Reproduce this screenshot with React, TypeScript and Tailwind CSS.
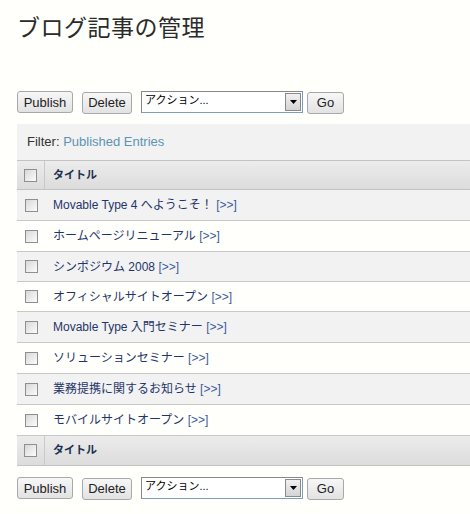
import React from "react";

const FONT = { fontFamily: '"Liberation Sans", Arial, "Noto Sans CJK JP", sans-serif' };

function Checkbox() {
  return (
    <span className="inline-block w-[13px] h-[13px] border border-[#8e8f8f] bg-gradient-to-br from-[#d8d8d8] to-[#fcfcfc]" />
  );
}

function Btn({ label, w }: { label: string; w: string }) {
  return (
    <button className={`${w} h-[22px] border border-[#a8a8a8] rounded-[3px] bg-gradient-to-b from-[#f7f7f7] to-[#e2e2e2] text-[13px] text-[#222] leading-none`}>
      {label}
    </button>
  );
}

function Actions() {
  return (
    <div className="flex items-center">
      <Btn label="Publish" w="w-[56px]" />
      <div className="ml-[9px]">
        <Btn label="Delete" w="w-[50px]" />
      </div>
      <div className="ml-[9px] flex items-stretch w-[162px] h-[22px] border border-[#7f9db9] border-l-[#888] border-t-[#888] bg-white">
        <span className="flex-1 pl-[3px] pt-[1px] text-[11px] text-black leading-[14px]">アクション...</span>
        <span className="w-[16px] m-[1px] border border-[#8a8a8a] bg-gradient-to-b from-[#f0f0f0] to-[#d4d4d4] flex items-center justify-center">
          <svg width="7" height="4" viewBox="0 0 7 4"><path d="M0 0h7L3.5 4z" fill="#000" /></svg>
        </span>
      </div>
      <div className="ml-[4px]">
        <Btn label="Go" w="w-[37px]" />
      </div>
    </div>
  );
}

const entries = [
  "Movable Type 4 へようこそ！",
  "ホームページリニューアル",
  "シンポジウム 2008",
  "オフィシャルサイトオープン",
  "Movable Type 入門セミナー",
  "ソリューションセミナー",
  "業務提携に関するお知らせ",
  "モバイルサイトオープン",
];

const heights = ["h-[31px]", "h-[31px]", "h-[30px]", "h-[30px]", "h-[31px]", "h-[31px]", "h-[31px]", "h-[31px]"];

function HeaderRow({ top }: { top?: boolean }) {
  return (
    <div className={`flex h-[30px] border-b border-[#c3c3c3] bg-gradient-to-b from-[#ececec] to-[#dcdcdc] ${top ? "border-t" : ""}`}>
      <div className="w-[28px] border-r border-[#c9c9c9] flex items-center justify-center">
        <Checkbox />
      </div>
      <div className="flex items-center pl-[8px] text-[11px] font-bold text-[#1b2f4f]">タイトル</div>
    </div>
  );
}

export default function App() {
  return (
    <div className="w-[470px] h-[514px] bg-[#fffffb] overflow-hidden" style={FONT}>
      <div className="pl-[17px]">
        <h1 className="pt-[13px] text-[23px] leading-[30px] text-[#2b2b2b] tracking-[0.5px]">ブログ記事の管理</h1>
        <div className="mt-[47px]">
          <Actions />
        </div>
        <div className="mt-[10px] h-[36px] bg-[#f2f2f2] flex items-center pl-[10px] text-[13px] text-[#333]">
          Filter:&nbsp;<span className="text-[#5d93b2]">Published Entries</span>
        </div>
        <HeaderRow top />
        {entries.map((e, i) => (
          <div
            key={i}
            className={`flex ${heights[i]} border-b border-[#c8c8c8] ${i % 2 === 0 ? "bg-[#f2f2f2]" : "bg-[#fffffb]"}`}
          >
            <div className="w-[29px] flex items-center justify-center">
              <Checkbox />
            </div>
            <div className="flex items-center pl-[7px] text-[12px] text-[#1f3569]">
              {e}&nbsp;<span className="text-[#3b5b9a]">[&gt;&gt;]</span>
            </div>
          </div>
        ))}
        <HeaderRow />
        <div className="mt-[10px]">
          <Actions />
        </div>
      </div>
    </div>
  );
}
